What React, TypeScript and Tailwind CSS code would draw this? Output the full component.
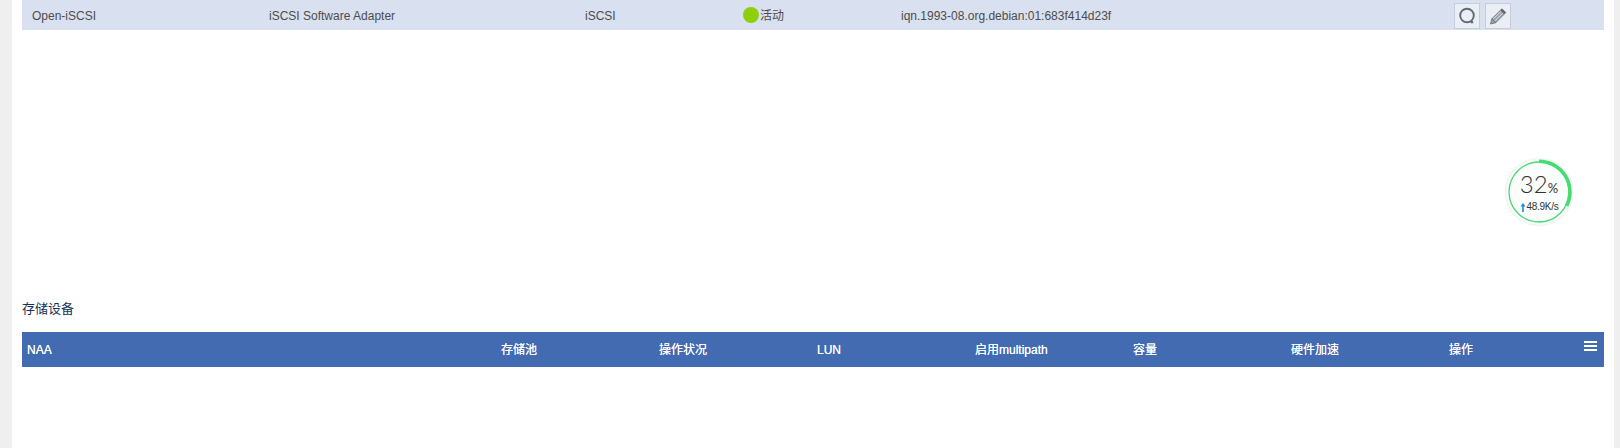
const FONT = "font-['Liberation_Sans','Noto_Sans_CJK_SC',sans-serif]";

const headers = ['NAA', '存储池', '操作状况', 'LUN', '启用multipath', '容量', '硬件加速', '操作'];

function SearchIcon() {
  return (
    <svg width="20" height="20" viewBox="0 0 20 20" fill="none">
      <circle cx="10" cy="9.5" r="6.8" stroke="#5f6b76" strokeWidth="1.9" />
      <path d="M13.8 15l2 2" stroke="#5f6b76" strokeWidth="2.4" />
    </svg>
  );
}

function PencilIcon() {
  return (
    <svg width="20" height="20" viewBox="0 0 20 20" fill="none">
      <path d="M2.5 18l1.3-5.2L14 2.8l3.8 3.8L7.7 16.7z" fill="#9aa3ac" stroke="#6b7680" strokeWidth="0.9" />
      <path d="M5.2 13l9-9M7 14.8l9-9" stroke="#eef0f4" strokeWidth="0.8" />
      <path d="M3.8 12.8l3.9 3.9" stroke="#6b7680" strokeWidth="1" />
      <path d="M14 2.8l3.8 3.8-1.6 1.6-3.8-3.8z" fill="#5f6b76" />
    </svg>
  );
}

function IconButton({ children }: { children: React.ReactNode }) {
  return (
    <button className="flex h-[26px] w-[26px] items-center justify-center border border-[#c6ced8] bg-[#ebeef4]">
      {children}
    </button>
  );
}

function SpeedBall() {
  return (
    <div className="absolute left-[1504px] top-[157px] h-[70px] w-[70px]">
      <svg width="70" height="70" viewBox="0 0 70 70" fill="none">
        <circle cx="35" cy="35" r="34.5" fill="#f3f5f4" />
        <circle cx="35" cy="35" r="32.5" fill="#ffffff" />
        <circle cx="35" cy="35" r="30" fill="#fbfefc" stroke="#3fdc6f" strokeWidth="1.3" />
        <path d="M35 4.2A30.8 30.8 0 0 1 62.6 49" stroke="#46dc74" strokeWidth="3.6" />
      </svg>
      <div className="absolute left-0 top-[15px] w-full text-center font-['Lato'] leading-none text-[#333]">
        <span className="text-[24px] font-light">32</span>
        <span className="text-[13px]">%</span>
      </div>
      <div className="absolute left-0 top-[45px] flex w-full items-center justify-center gap-[1px] text-[10px] leading-none tracking-[-0.3px] text-[#333]">
        <svg width="6" height="10" viewBox="0 0 6 10" fill="none">
          <path d="M3 1L.5 4.5h1.7V10h1.6V4.5h1.7z" fill="#1e88e5" />
        </svg>
        48.9K/s
      </div>
    </div>
  );
}

export default function App() {
  return (
    <div className={`${FONT} relative h-[448px] overflow-hidden bg-[#efefef] pl-3 pr-1.5`}>
      <div className="h-full bg-white px-2.5">
        <div className="grid h-[30px] grid-cols-[237px_316px_158px_158px_553px_160px] items-center bg-[#d9e0ef] pt-[2px] text-xs text-[#4d4d4d]">
          <div className="pl-2.5">Open-iSCSI</div>
          <div className="pl-2.5">iSCSI Software Adapter</div>
          <div className="pl-2.5">iSCSI</div>
          <div className="flex items-center pl-2.5">
            <span className="mr-px -mt-[2px] h-4 w-4 rounded-full bg-[#8ccf0a]" />
            活动
          </div>
          <div className="pl-2.5">iqn.1993-08.org.debian:01:683f414d23f</div>
          <div className="flex gap-[5px] pl-2.5">
            <IconButton><SearchIcon /></IconButton>
            <IconButton><PencilIcon /></IconButton>
          </div>
        </div>

        <h3 className="mt-[269px] h-[33px] text-[13px] font-normal leading-5 text-[#17335c]">存储设备</h3>

        <div className="grid h-[35px] grid-cols-[474px_158px_158px_158px_158px_158px_158px_160px] items-center bg-[#436bb2] text-xs text-white [text-shadow:0_0_0.6px_#ffffff]">
          {headers.map((h, i) => (
            <div key={h} className="flex items-center justify-between pl-[5px]">
              {h}
              {i === headers.length - 1 && (
                <span className="mr-[7px] -mt-2 flex w-[13px] flex-col gap-[2px]">
                  <span className="h-[2px] bg-white" />
                  <span className="h-[2px] bg-white" />
                  <span className="h-[2px] bg-white" />
                </span>
              )}
            </div>
          ))}
        </div>
      </div>
      <SpeedBall />
    </div>
  );
}
